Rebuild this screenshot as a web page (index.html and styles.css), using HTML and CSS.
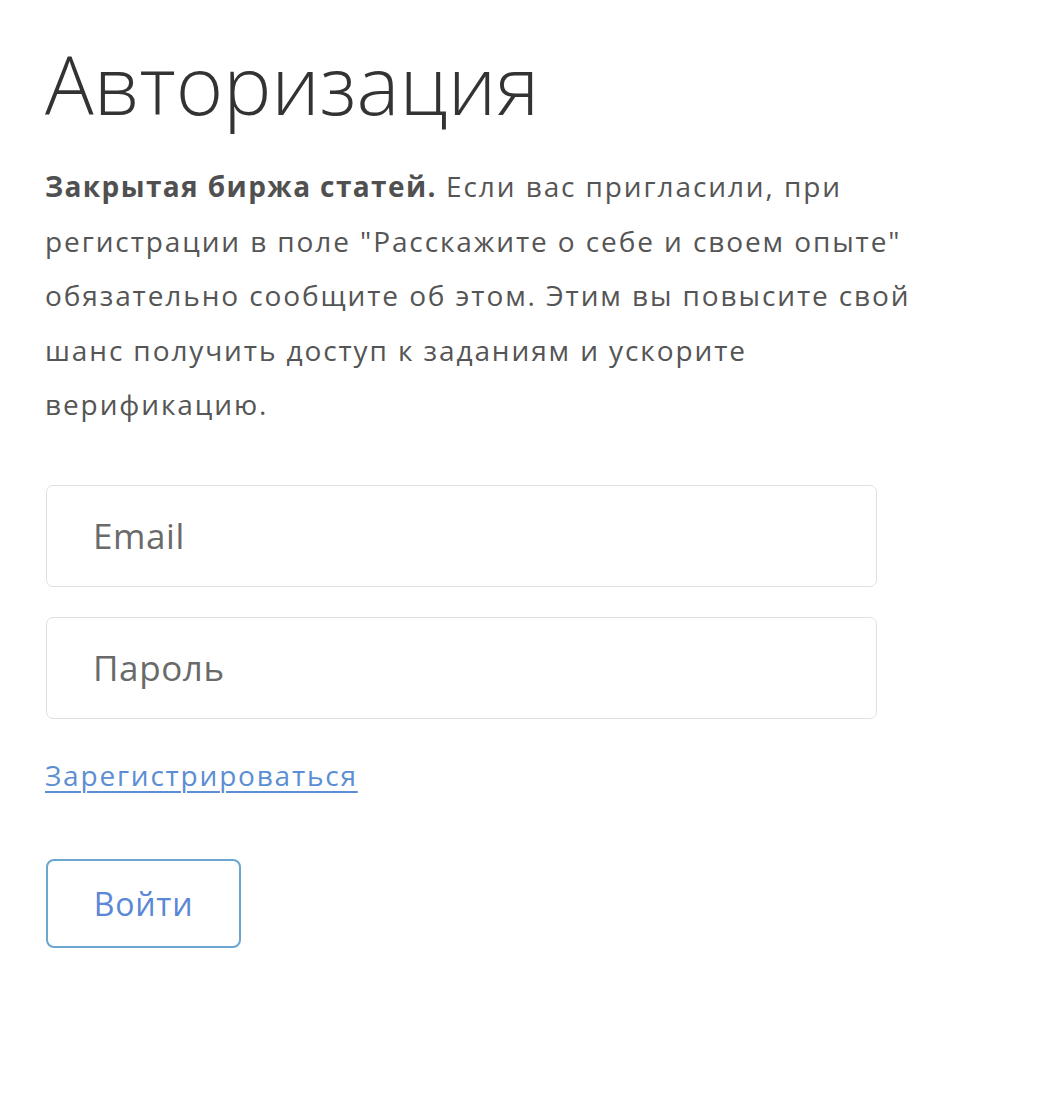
FILE: index.html
```html
<!DOCTYPE html>
<html lang="ru">
<head>
<meta charset="utf-8">
<title>Авторизация</title>
<link rel="stylesheet" href="styles.css">
</head>
<body>
<main class="page">
  <h1 class="title">Авторизация</h1>
  <p class="intro"><strong>Закрытая биржа статей.</strong> Если вас пригласили, при регистрации в поле "Расскажите о себе и своем опыте" обязательно сообщите об этом. Этим вы повысите свой шанс получить доступ к заданиям и ускорите верификацию.</p>
  <form class="form">
    <input class="field" type="email" placeholder="Email">
    <input class="field" type="password" placeholder="Пароль">
    <a class="register" href="#">Зарегистрироваться</a>
    <button class="submit" type="button">Войти</button>
  </form>
</main>
</body>
</html>
```
FILE: styles.css
```css
html, body {
  margin: 0;
  padding: 0;
  background: #fff;
}
body {
  font-family: "Open Sans", "Noto Sans", sans-serif;
  color: #555;
}
.page {
  padding: 34px 0 0 45px;
  width: 880px;
}
.title {
  margin: 0;
  font-family: "Open Sans", sans-serif;
  font-weight: 300;
  font-size: 81px;
  line-height: 100px;
  color: #333;
}
.intro {
  margin: 25px 0 0 0;
  font-size: 28px;
  line-height: 54.5px;
  letter-spacing: 1.9px;
  color: #555;
}
.intro strong {
  font-weight: 700;
  letter-spacing: 1.4px;
  color: #505050;
}
.form {
  margin-top: 53px;
  display: flex;
  flex-direction: column;
  align-items: flex-start;
}
.field {
  box-sizing: border-box;
  width: 831px;
  height: 102px;
  margin: 0 0 30px 1px;
  padding: 0 46px;
  border: 1.5px solid #e0e0e0;
  border-radius: 7px;
  font-family: "Open Sans", sans-serif;
  font-size: 35px;
  letter-spacing: 0.6px;
  color: #555;
  outline: none;
  background: #fff;
}
.field::placeholder {
  color: #6a6a6a;
}
.register {
  margin-top: 6px;
  font-size: 28px;
  line-height: 40px;
  letter-spacing: 1.8px;
  color: #5b8ed2;
  text-decoration: underline;
  text-underline-offset: 5px;
  text-decoration-thickness: 1.5px;
}
.submit {
  margin: 64px 0 0 1px;
  box-sizing: border-box;
  width: 195px;
  height: 89px;
  border: 2px solid #6aa6cf;
  border-radius: 8px;
  background: #fff;
  font-family: "Open Sans", sans-serif;
  font-size: 32px;
  letter-spacing: 0.8px;
  color: #5b88d6;
  cursor: pointer;
}
```
